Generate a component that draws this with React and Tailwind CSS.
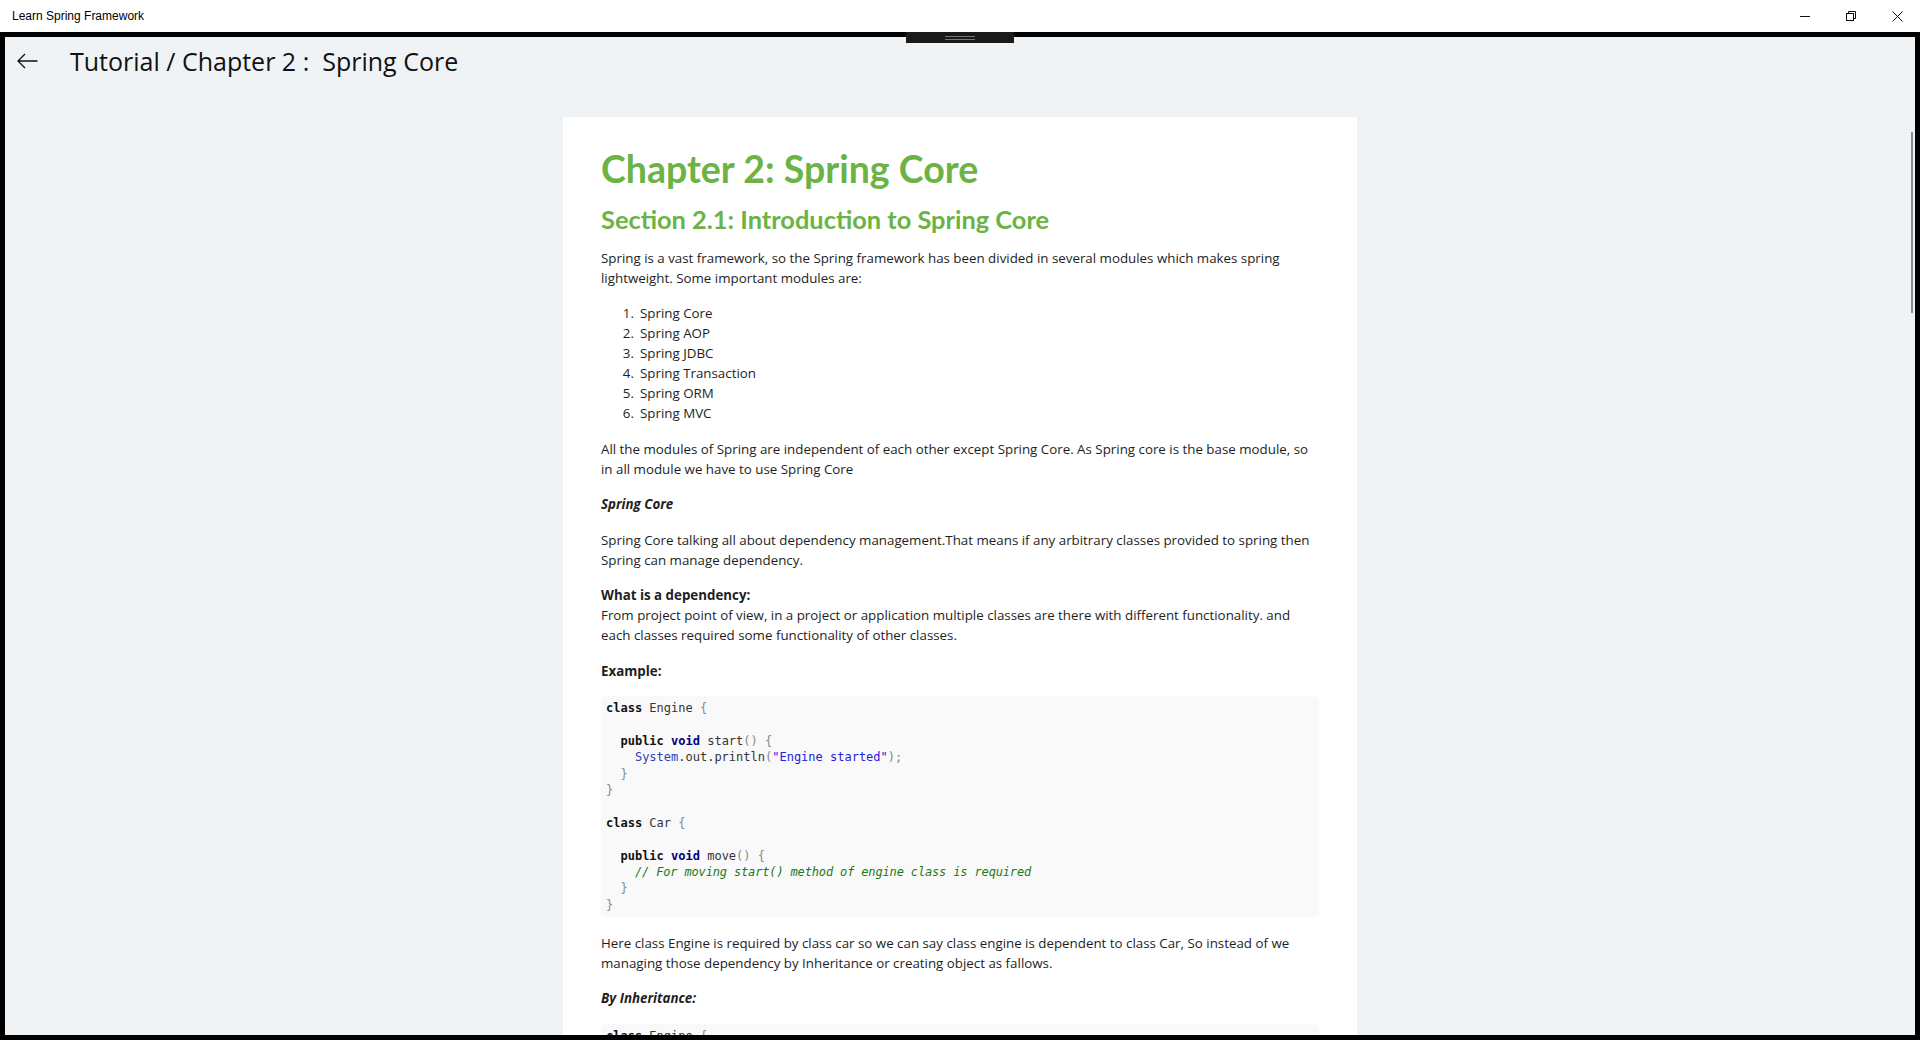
import React from 'react'

const body = { fontFamily: '"Open Sans", "Noto Sans", sans-serif' }
const heading = { fontFamily: 'Lato, "Open Sans", sans-serif' }
const mono = { fontFamily: '"DejaVu Sans Mono", "Liberation Mono", monospace' }

const modules = ['Spring Core', 'Spring AOP', 'Spring JDBC', 'Spring Transaction', 'Spring ORM', 'Spring MVC']

function Kw({ children, navy }) {
  return <span className={navy ? 'font-bold text-[#000080]' : 'font-bold text-[#111]'}>{children}</span>
}

function P({ children }) {
  return <span className="text-[#888]">{children}</span>
}

function CodeBlock({ children }) {
  return (
    <pre
      style={mono}
      className="mt-[15.5px] rounded-[6px] bg-[#f9f9f9] py-[4px] pl-[5px] text-[12px] leading-[16.4px] text-[#333]"
    >
      {children}
    </pre>
  )
}

function EngineClass() {
  return (
    <>
      <Kw>class</Kw> Engine <P>{'{'}</P>
      {'\n\n'}
      {'  '}<Kw>public</Kw> <Kw navy>void</Kw> start<P>()</P> <P>{'{'}</P>
      {'\n'}
      {'    '}<span className="text-[#2a45b8]">System</span>.out.println<P>(</P>
      <span className="text-[#2222dd]">"Engine started"</span>
      <P>);</P>
      {'\n'}
      {'  '}<P>{'}'}</P>
      {'\n'}
      <P>{'}'}</P>
    </>
  )
}

function TitleBar() {
  return (
    <div className="flex h-[32px] items-center justify-between bg-white">
      <span className="pl-[12px] text-[12px] text-black" style={{ fontFamily: '"Liberation Sans", Arial, sans-serif' }}>
        Learn Spring Framework
      </span>
      <div className="flex h-full items-center">
        <div className="flex h-full w-[46px] items-center justify-center">
          <svg width="10" height="10" viewBox="0 0 10 10">
            <path d="M0 5.5h10" stroke="#111" strokeWidth="1" />
          </svg>
        </div>
        <div className="flex h-full w-[46px] items-center justify-center">
          <svg width="10" height="10" viewBox="0 0 10 10" fill="none">
            <rect x="0.5" y="2.5" width="7" height="7" stroke="#111" strokeWidth="1" />
            <path d="M2.5 2.5V0.5h7v7h-2" stroke="#111" strokeWidth="1" />
          </svg>
        </div>
        <div className="flex h-full w-[46px] items-center justify-center">
          <svg width="11" height="11" viewBox="0 0 11 11">
            <path d="M0.5 0.5l10 10M10.5 0.5l-10 10" stroke="#111" strokeWidth="1" />
          </svg>
        </div>
      </div>
    </div>
  )
}

export default function App() {
  return (
    <div className="relative h-[1040px] w-[1920px] overflow-hidden bg-white">
      <TitleBar />

      <div className="relative h-[1008px] border-[5px] border-black bg-[#eff3f6]">
        {/* drag handle */}
        <div className="absolute left-[901px] top-[-5px] z-10 flex h-[11px] w-[108px] flex-col items-center justify-center gap-[1.5px] bg-[#1a1a1a] pt-[1px]">
          <div className="h-px w-[30px] bg-[#777]" />
          <div className="h-px w-[30px] bg-[#777]" />
        </div>

        {/* scrollbar */}
        <div className="absolute left-[1906px] top-[95px] z-10 h-[181px] w-[2px] bg-[#8a8a8a]" />

        <div className="h-full overflow-hidden">
          <div className="flex h-[48px] items-center" style={body}>
            <div className="flex w-[65px] pl-[12px]">
              <svg width="21" height="16" viewBox="0 0 21 16" fill="none">
                <path d="M20.5 8H1M8 1L1 8l7 7" stroke="#111" strokeWidth="1.3" />
              </svg>
            </div>
            <h1 className="text-[25px] leading-[32px] text-[#111]">Tutorial / Chapter 2 :&nbsp; Spring Core</h1>
          </div>

          <div className="mx-auto mt-[32px] w-[794px] bg-white px-[38px] pt-[30px] pb-[40px]" style={body}>
            <h2 style={heading} className="text-[37.5px] font-bold leading-[44px] text-[#6ab344]">
              Chapter 2: Spring Core
            </h2>
            <h3 style={heading} className="mt-[11.5px] text-[25.4px] font-bold leading-[32px] text-[#6ab344]">
              Section 2.1: Introduction to Spring Core
            </h3>

            <div className="text-[13.33px] leading-[20px] text-[#1e1e1e]">
              <p className="mt-[13px] whitespace-nowrap">
                Spring is a vast framework, so the Spring framework has been divided in several modules which makes spring
                <br />
                lightweight. Some important modules are:
              </p>
              <ol className="mt-[15.5px]">
                {modules.map((m, i) => (
                  <li key={m} className="flex">
                    <span className="w-[33px] text-right">{i + 1}.</span>
                    <span className="ml-[6px]">{m}</span>
                  </li>
                ))}
              </ol>
              <p className="mt-[15.5px] whitespace-nowrap">
                All the modules of Spring are independent of each other except Spring Core. As Spring core is the base module, so
                <br />
                in all module we have to use Spring Core
              </p>
              <p className="mt-[15.5px] font-bold italic">Spring Core</p>
              <p className="mt-[15.5px] whitespace-nowrap">
                Spring Core talking all about dependency management.That means if any arbitrary classes provided to spring then
                <br />
                Spring can manage dependency.
              </p>
              <p className="mt-[15.5px] whitespace-nowrap">
                <span className="font-bold">What is a dependency:</span>
                <br />
                From project point of view, in a project or application multiple classes are there with different functionality. and
                <br />
                each classes required some functionality of other classes.
              </p>
              <p className="mt-[15.5px] font-bold">Example:</p>

              <CodeBlock>
                <EngineClass />
                {'\n\n'}
                <Kw>class</Kw> Car <P>{'{'}</P>
                {'\n\n'}
                {'  '}<Kw>public</Kw> <Kw navy>void</Kw> move<P>()</P> <P>{'{'}</P>
                {'\n'}
                {'    '}
                <span className="italic tracking-[-0.15px] text-[#1a7a1a]">
                  // For moving start() method of engine class is required
                </span>
                {'\n'}
                {'  '}<P>{'}'}</P>
                {'\n'}
                <P>{'}'}</P>
              </CodeBlock>

              <p className="mt-[15.5px] whitespace-nowrap">
                Here class Engine is required by class car so we can say class engine is dependent to class Car, So instead of we
                <br />
                managing those dependency by Inheritance or creating object as fallows.
              </p>
              <p className="mt-[15.5px] font-bold italic">By Inheritance:</p>

              <CodeBlock>
                <EngineClass />
              </CodeBlock>
            </div>
          </div>
        </div>
      </div>
    </div>
  )
}
